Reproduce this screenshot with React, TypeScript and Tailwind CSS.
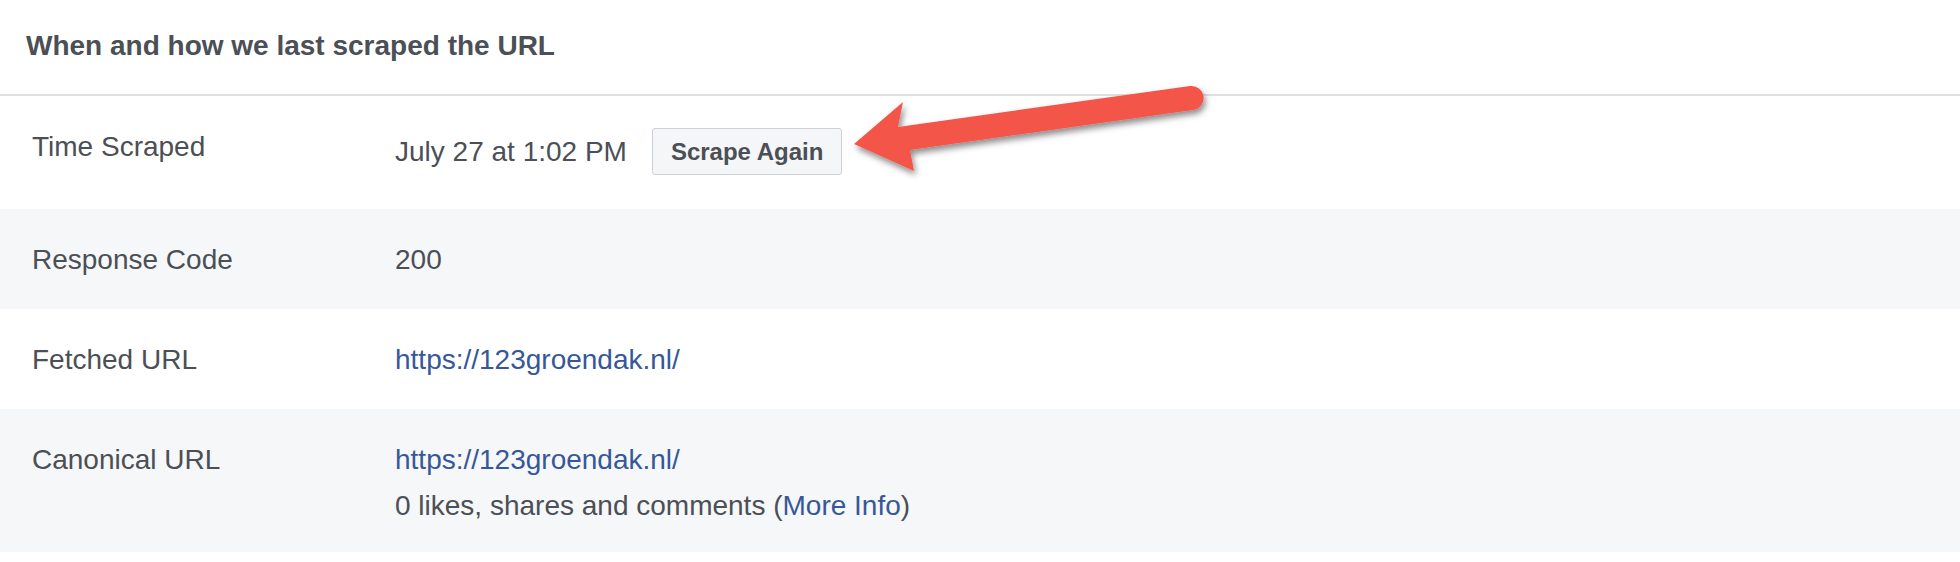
import React from "react";

const rows = [
  { label: "Response Code", value: <span>200</span>, bg: "bg-[#f6f7f9]" },
  {
    label: "Fetched URL",
    value: <a className="text-[#365899]">https://123groendak.nl/</a>,
    bg: "bg-white",
  },
];

export default function App() {
  return (
    <div className="relative min-h-[562px] w-full bg-white font-['Liberation_Sans',Arial,sans-serif] text-[28px] leading-[32px] text-[#4b4f56]">
      {/* section header */}
      <div className="h-[96px] border-b-2 border-[#dfe0e4] pl-[26px] pt-[30px]">
        <h2 className="font-bold">When and how we last scraped the URL</h2>
      </div>

      <div className="grid grid-cols-[395px_1fr] items-start bg-white">
        <div className="pl-[32px] pt-[35px]">Time Scraped</div>
        <div className="flex items-center gap-[25px] pt-[32px] pb-[34px]">
          <span>July 27 at 1:02 PM</span>
          <button className="h-[47px] rounded-[3px] border border-[#ccd0d5] bg-[#f5f6f7] px-[18px] text-[24px] font-bold text-[#4b4f56]">
            Scrape Again
          </button>
        </div>
      </div>

      {rows.map((r) => (
        <div key={r.label} className={`grid grid-cols-[395px_1fr] pt-[35px] pb-[33px] ${r.bg}`}>
          <div className="pl-[32px]">{r.label}</div>
          <div>{r.value}</div>
        </div>
      ))}

      <div className="grid grid-cols-[395px_1fr] bg-[#f6f7f9] pt-[35px] pb-[30px]">
        <div className="pl-[32px]">Canonical URL</div>
        <div className="flex flex-col gap-[14px]">
          <a className="text-[#365899]">https://123groendak.nl/</a>
          <span>
            0 likes, shares and comments (<a className="text-[#365899]">More Info</a>)
          </span>
        </div>
      </div>

      {/* annotation arrow pointing at the button */}
      <svg
        className="pointer-events-none absolute left-[830px] top-[60px] h-[140px] w-[400px]"
        viewBox="830 60 400 140"
      >
        <defs>
          <filter id="arrowShadow" x="-10%" y="-30%" width="120%" height="160%">
            <feDropShadow dx="2" dy="4" stdDeviation="3" floodColor="#000" floodOpacity="0.45" />
          </filter>
        </defs>
        <path
          d="M854 144 L903 102 L898 127 L1190 86 A12 12 0 0 1 1193 110 L910 150 L914 171 Z"
          fill="#f3574a"
          filter="url(#arrowShadow)"
        />
      </svg>
    </div>
  );
}
